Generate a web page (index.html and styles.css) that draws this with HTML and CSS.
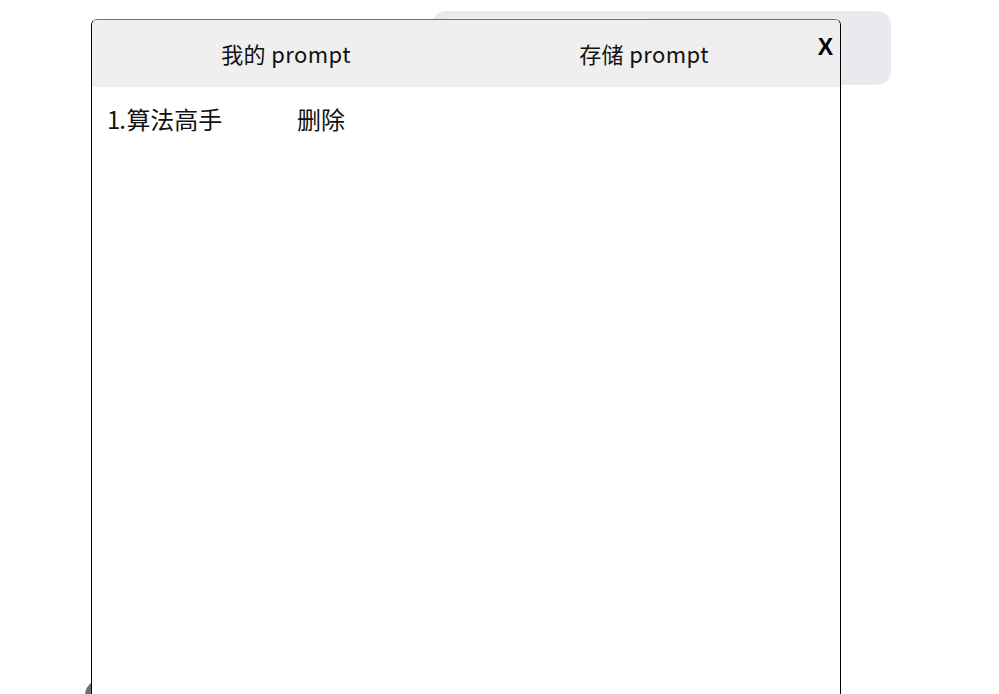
FILE: index.html
```html
<!DOCTYPE html>
<html lang="zh">
<head>
<meta charset="utf-8">
<title>prompt</title>
<link rel="stylesheet" href="styles.css">
</head>
<body>
<div class="page">
  <div class="bg-bar"><div class="bg-pill"></div></div>
  <div class="bg-dot"></div>
  <div class="modal">
    <div class="modal-head">
      <div class="tab">我的 prompt</div>
      <div class="tab">存储 prompt</div>
      <div class="close">X</div>
    </div>
    <div class="modal-body">
      <div class="row">
        <span class="row-name"><span class="row-num">1. </span>算法高手</span>
        <span class="row-del">删除</span>
      </div>
    </div>
  </div>
</div>
</body>
</html>
```

FILE: styles.css
```css
html, body {
  margin: 0;
  padding: 0;
  background: #ffffff;
  overflow: hidden;
}
.page {
  position: relative;
  width: 999px;
  height: 694px;
  font-family: "Noto Sans CJK SC", "Noto Sans", sans-serif;
  color: #111;
}
.bg-bar {
  position: absolute;
  left: 432px;
  top: 11px;
  width: 459px;
  height: 74px;
  border-radius: 14px;
  background: #e9e9ee;
}
.bg-pill {
  position: absolute;
  left: 11px;
  top: 6px;
  width: 209px;
  height: 40px;
  border-radius: 10px;
  background: #efeff2;
}
.bg-dot {
  position: absolute;
  left: 85px;
  top: 680px;
  width: 30px;
  height: 30px;
  border-radius: 50%;
  background: #6d6d7d;
}
.modal {
  position: absolute;
  left: 91px;
  top: 19px;
  width: 748px;
  height: 700px;
  border: 1px solid #000;
  border-top-color: #6f6f6f;
  border-radius: 6px;
  background: #fff;
  overflow: hidden;
}
.modal-head {
  position: relative;
  display: flex;
  height: 67px;
  padding-left: 15px;
  background: #efefef;
}
.tab {
  flex: 0 0 358px;
  text-align: center;
  font-size: 22px;
  letter-spacing: 0.4px;
  line-height: 67px;
  color: #111;
}
.close {
  position: absolute;
  right: 7px;
  top: 13px;
  font-family: "Liberation Sans", Arial, sans-serif;
  font-weight: bold;
  font-size: 23px;
  line-height: 28px;
  color: #000;
}
.modal-body {
  padding: 15px 0 0 15px;
}
.row {
  display: flex;
  font-size: 24px;
  line-height: 34px;
  color: #111;
}
.row-name {
  width: 190px;
  white-space: pre;
}
.row-num {
  letter-spacing: -1px;
  word-spacing: -3px;
}
```
